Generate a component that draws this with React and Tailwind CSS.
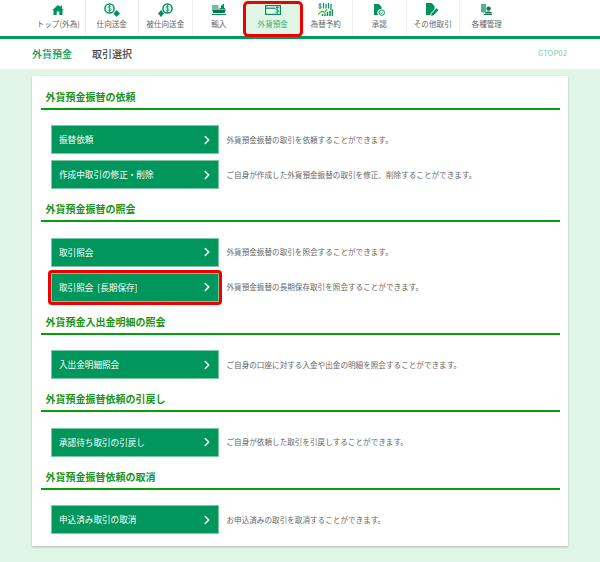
import { ChevronRight } from 'lucide-react';

const navItems = [
  { label: 'トップ(外為)', icon: 'home' },
  { label: '仕向送金', icon: 'outgoing' },
  { label: '被仕向送金', icon: 'incoming' },
  { label: '輸入', icon: 'ship' },
  { label: '外貨預金', icon: 'card', active: true },
  { label: '為替予約', icon: 'chart' },
  { label: '承認', icon: 'approve' },
  { label: 'その他取引', icon: 'doc' },
  { label: '各種管理', icon: 'admin', last: true },
];

const sections = [
  {
    title: '外貨預金振替の依頼',
    rows: [
      { label: '振替依頼', text: '外貨預金振替の取引を依頼することができます。' },
      { label: '作成中取引の修正・削除', text: 'ご自身が作成した外貨預金振替の取引を修正、削除することができます。' },
    ],
  },
  {
    title: '外貨預金振替の照会',
    rows: [
      { label: '取引照会', text: '外貨預金振替の取引を照会することができます。' },
      { label: '取引照会 [長期保存]', text: '外貨預金振替の長期保存取引を照会することができます。', marked: true },
    ],
  },
  {
    title: '外貨預金入出金明細の照会',
    rows: [{ label: '入出金明細照会', text: 'ご自身の口座に対する入金や出金の明細を照会することができます。' }],
  },
  {
    title: '外貨預金振替依頼の引戻し',
    rows: [{ label: '承認待ち取引の引戻し', text: 'ご自身が依頼した取引を引戻しすることができます。' }],
  },
  {
    title: '外貨預金振替依頼の取消',
    rows: [{ label: '申込済み取引の取消', text: 'お申込済みの取引を取消することができます。' }],
  },
];

function NavIcon({ name }) {
  const green = '#00925a';
  if (name === 'home') {
    return (
      <svg width="12" height="10" viewBox="0 0 12 10">
        <path d="M6 0 L8.5 2.1 V0.6 H10 V3.4 L12 5.2 H10.5 V10 H7.3 V6.6 H4.7 V10 H1.5 V5.2 H0 Z" fill={green} />
      </svg>
    );
  }
  if (name === 'outgoing') {
    return (
      <svg width="16" height="14" viewBox="0 0 16 14">
        <circle cx="5.5" cy="5.5" r="4.6" fill="none" stroke={green} strokeWidth="1.5" />
        <path d="M7.3 3.8 C6.8 2.9 4 2.9 3.9 4.2 C3.9 5.6 7.2 5.2 7.2 6.8 C7.2 8.2 4.2 8.1 3.7 7.1 M5.5 2 V9" fill="none" stroke={green} strokeWidth="0.8" />
        <path d="M12.5 7 L16 10.5 L12.5 14 L9.5 10.5 Z" fill={green} />
      </svg>
    );
  }
  if (name === 'incoming') {
    return (
      <svg width="15" height="14" viewBox="0 0 15 14">
        <circle cx="9.5" cy="5.5" r="4.6" fill="none" stroke={green} strokeWidth="1.5" />
        <path d="M11.3 3.8 C10.8 2.9 8 2.9 7.9 4.2 C7.9 5.6 11.2 5.2 11.2 6.8 C11.2 8.2 8.2 8.1 7.7 7.1 M9.5 2 V9" fill="none" stroke={green} strokeWidth="0.8" />
        <path d="M3 7 L6 10.5 L3 14 L0 10.5 Z" fill={green} />
      </svg>
    );
  }
  if (name === 'ship') {
    return (
      <svg width="14" height="11" viewBox="0 0 14 11">
        <path d="M0 1 H6.5 V5 H0 Z" fill="#6cc09a" />
        <path d="M7.5 4 H9 V1.5 H10.5 V0 H12 V4 H13 V5 H7.5 Z" fill={green} />
        <path d="M0 5.6 H14 L12.6 9 H1.2 Z" fill="#17704c" />
        <path d="M0 10 H14 V11 H0 Z" fill={green} />
      </svg>
    );
  }
  if (name === 'card') {
    return (
      <svg width="16" height="10" viewBox="0 0 16 10">
        <rect x="0.6" y="0.6" width="14.8" height="8.8" fill="#f2fbf5" stroke={green} strokeWidth="1.2" />
        <path d="M1 3.2 H10" stroke={green} strokeWidth="1.2" />
        <path d="M14 2.8 C13 1.9 10.6 2.2 10.6 3.6 C10.6 5 13.8 4.6 13.8 6.2 C13.8 7.6 11.2 7.6 10.4 6.8 M12.2 1 V9" fill="none" stroke={green} strokeWidth="0.9" />
      </svg>
    );
  }
  if (name === 'chart') {
    return (
      <svg width="15" height="13" viewBox="0 0 15 13">
        <path d="M3.4 1.4 C2.8 0.7 0.8 0.8 0.8 2 C0.8 3.3 3.5 2.9 3.5 4.2 C3.5 5.3 1.2 5.3 0.6 4.6 M2.1 0 V6" fill="none" stroke={green} strokeWidth="0.8" />
        <path d="M5.5 0 V5.5 M8 1 V5.5 M10.5 0 V5.5 M13 1 V7" stroke={green} strokeWidth="1.2" />
        <path d="M0 11.5 L4 8 L6.5 9.5 L9 6.5" stroke="#63b52f" strokeWidth="1.3" fill="none" />
        <path d="M4.5 13 V11 M7 13 V10.5 M9.5 13 V9 M12 13 V8 M14.4 13 V6.5" stroke={green} strokeWidth="1.5" />
      </svg>
    );
  }
  if (name === 'approve') {
    return (
      <svg width="11" height="12" viewBox="0 0 11 12">
        <path d="M0 0 H4.8 L7.5 2.7 V5 A3.6 3.6 0 0 0 4.3 11 H0 Z" fill={green} />
        <circle cx="7.8" cy="8.6" r="2.7" fill="none" stroke={green} strokeWidth="1" />
        <path d="M6.6 8.6 L7.5 9.5 L9 8" fill="none" stroke={green} strokeWidth="0.8" />
      </svg>
    );
  }
  if (name === 'doc') {
    return (
      <svg width="13" height="13" viewBox="0 0 13 13">
        <path d="M0 0 H5.5 L8.5 3 V6.2 L4.5 10.6 V12 H0 Z" fill={green} />
        <path d="M5.6 10.4 L10.5 5.2 L12.6 7 L7.6 12.2 L5.2 12.9 Z" fill={green} />
      </svg>
    );
  }
  return (
    <svg width="11" height="11" viewBox="0 0 11 11">
      <path d="M0 0 H5 V8.5 H0 Z" fill="#4fb58b" />
      <circle cx="7.6" cy="4.6" r="2.2" fill="#17704c" />
      <path d="M4 9.2 C4 6.8 11 6.8 11 9.2 V9.6 H4 Z" fill="#17704c" />
      <path d="M3 10 H11 V11 H3 Z" fill="#17704c" />
    </svg>
  );
}

function NavItem({ item }) {
  return (
    <div
      className={
        item.active
          ? 'relative flex h-[36px] w-[53.5px] flex-col items-center bg-[#e0f5e6] text-[#3cae75]'
          : item.last
            ? 'flex h-[36px] w-[53.5px] flex-col items-center text-[#666666]'
            : 'flex h-[36px] w-[53.5px] flex-col items-center border-r-[1.5px] border-[#f0f0f0] text-[#666666]'
      }
    >
      <div className="flex h-[18px] items-center justify-center pt-[1px]">
        <NavIcon name={item.icon} />
      </div>
      <span className="whitespace-nowrap text-[7.6px] leading-[12px]">{item.label}</span>
      {item.active && (
        <div className="absolute -bottom-[1px] -left-[3.5px] -right-[3.5px] top-[0.5px] rounded-[5px] border-[3px] border-[#ee0000]" />
      )}
    </div>
  );
}

function Row({ row }) {
  return (
    <div className="flex items-center">
      <div className="relative flex h-[29px] w-[168px] items-center justify-between border border-[#7cc8a6] bg-[#00965c] pl-[7px] pr-[4.5px] text-[8.6px] text-white">
        <span className="[word-spacing:2px]">{row.label}</span>
        <ChevronRight size={14} strokeWidth={2.6} />
        {row.marked && <div className="absolute -inset-[4px] rounded-[4px] border-[3px] border-[#ee0000]" />}
      </div>
      <p className="ml-[7.5px] text-[7.6px] text-[#666666]">{row.text}</p>
    </div>
  );
}

function Section({ section }) {
  return (
    <section className="pb-[13px]">
      <h2 className="h-[18px] pl-[5px] text-[10px] font-bold leading-[13px] text-[#1a9414]">{section.title}</h2>
      <div className="h-[2px] bg-[#0a9e0a]" />
      <div className="flex flex-col gap-[6px] pl-[10.5px] pt-[15.5px]">
        {section.rows.map((row) => (
          <Row key={row.label} row={row} />
        ))}
      </div>
    </section>
  );
}

export default function App() {
  return (
    <div
      className="flex h-[562px] w-[600px] flex-col overflow-hidden bg-[#e0f5e6]"
      style={{ fontFamily: '"Noto Sans CJK JP", "Liberation Sans", sans-serif' }}
    >
      <header className="flex h-[39px] shrink-0 border-b-[3px] border-[#009a5e] bg-white pl-[32px]">
        {navItems.map((item) => (
          <NavItem key={item.label} item={item} />
        ))}
      </header>
      <div className="flex h-[30px] shrink-0 items-center justify-between bg-white pb-[2px] pl-[32px] pr-[33px]">
        <div className="flex items-center gap-[20px] text-[10px] font-medium">
          <span className="text-[#009a5e]">外貨預金</span>
          <span className="text-[#444444]">取引選択</span>
        </div>
        <span className="text-[7.8px] text-[#7dcfa5]">GTOP02</span>
      </div>
      <main className="mx-[32px] mt-[7px] h-[470px] shrink-0 bg-white px-[8.5px] pt-[13.5px] shadow-[0_1px_2px_rgba(0,0,0,0.25)]">
        {sections.map((section) => (
          <Section key={section.title} section={section} />
        ))}
      </main>
    </div>
  );
}
